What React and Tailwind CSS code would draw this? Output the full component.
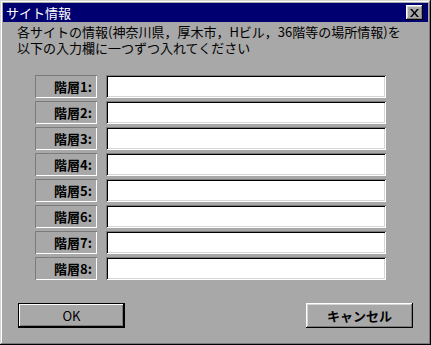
import React from "react";

const floors = [1, 2, 3, 4, 5, 6, 7, 8];

const raised =
  "shadow-[inset_-1px_-1px_#000,inset_1px_1px_#fff,inset_-2px_-2px_#7b7b7b,inset_2px_2px_#d6d6d6]";

const App = () => {
  return (
    <div
      className="w-[431px] h-[345px] bg-[#a8a8a8] p-[3px] flex flex-col shadow-[inset_-1px_-1px_#000,inset_1px_1px_#d6d6d6,inset_-2px_-2px_#7b7b7b,inset_2px_2px_#fff]"
      style={{ fontFamily: '"Noto Sans CJK JP", "Noto Sans", sans-serif' }}
    >
      {/* title bar */}
      <div className="h-[19px] bg-[#000070] flex items-center justify-between pl-[3px] pr-[5px]">
        <span className="text-white text-[13px] leading-none">サイト情報</span>
        <button className={`w-[17px] h-[15px] bg-[#a8a8a8] flex items-center justify-center ${raised}`}>
          <svg width="9" height="8" viewBox="0 0 9 8">
            <path d="M0 0h2l2.5 3 2.5-3h2L5.5 4 9 8H7L4.5 5 2 8H0l3.5-4z" fill="#000" />
          </svg>
        </button>
      </div>

      {/* description */}
      <div className="mt-[2px] pl-[14px] text-[13px] leading-[16px] text-black">
        <p>各サイトの情報(神奈川県，厚木市，Hビル，36階等の場所情報)を</p>
        <p>以下の入力欄に一つずつ入れてください</p>
      </div>

      {/* rows */}
      <div className="mt-[19px] pl-[32px] flex flex-col gap-[3px]">
        {floors.map((n) => (
          <div key={n} className="flex items-center gap-[9px] h-[23px]">
            <div className="w-[62px] h-[23px] flex items-center justify-end pr-[5px] text-[13px] font-bold text-black shadow-[inset_1px_1px_#7b7b7b,inset_-1px_-1px_#fff] bg-[#a8a8a8]">
              階層{n}:
            </div>
            <div className="w-[280px] h-[23px] bg-white shadow-[inset_1px_1px_#7b7b7b,inset_-1px_-1px_#fff,inset_2px_2px_#000,inset_-2px_-2px_#d6d6d6]" />
          </div>
        ))}
      </div>

      {/* buttons */}
      <div className="mt-[23px] flex justify-between pl-[15px] pr-[15px]">
        <button className="w-[107px] h-[25px] bg-[#a8a8a8] text-[13px] text-black flex items-center justify-center border border-black shadow-[inset_-1px_-1px_#000,inset_1px_1px_#fff,inset_-2px_-2px_#7b7b7b]">
          OK
        </button>
        <button className={`w-[107px] h-[25px] bg-[#a8a8a8] text-[13px] text-black font-bold flex items-center justify-center ${raised}`}>
          キャンセル
        </button>
      </div>
    </div>
  );
};

export default App;
